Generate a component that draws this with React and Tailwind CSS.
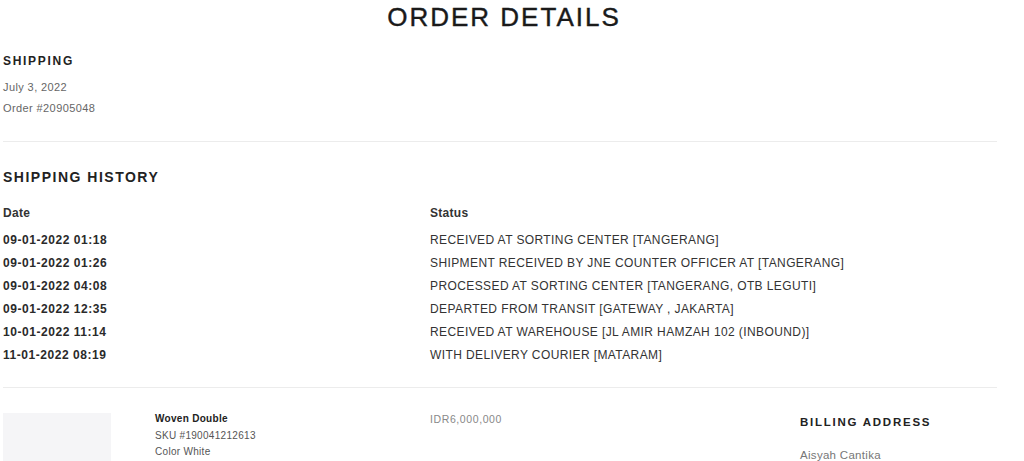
export default function App() {
  const rows = [
    ["09-01-2022 01:18", "RECEIVED AT SORTING CENTER [TANGERANG]"],
    ["09-01-2022 01:26", "SHIPMENT RECEIVED BY JNE COUNTER OFFICER AT [TANGERANG]"],
    ["09-01-2022 04:08", "PROCESSED AT SORTING CENTER [TANGERANG, OTB LEGUTI]"],
    ["09-01-2022 12:35", "DEPARTED FROM TRANSIT [GATEWAY , JAKARTA]"],
    ["10-01-2022 11:14", "RECEIVED AT WAREHOUSE [JL AMIR HAMZAH 102 (INBOUND)]"],
    ["11-01-2022 08:19", "WITH DELIVERY COURIER [MATARAM]"],
  ];
  return (
    <div className="w-full bg-white pl-[3px] pr-[19px] font-['Liberation_Sans',Arial,sans-serif] text-[#222]">
      <h1 className="text-center text-[26px] leading-[34px] tracking-[2px] text-[#1a1a1a] [-webkit-text-stroke:0.4px_#1a1a1a]">ORDER DETAILS</h1>

      <div className="mt-[19px] text-[12px] leading-[16px] font-bold tracking-[1.7px] text-[#222]">SHIPPING</div>
      <div className="mt-[8px] text-[11px] leading-[20px] text-[#666] tracking-[0.4px]">July 3, 2022</div>
      <div className="text-[11px] leading-[22px] text-[#666] tracking-[0.4px]">Order #20905048</div>

      <div className="mt-[22px] mr-2 border-t border-[#ececec]" />

      <div className="mt-[25px] text-[14px] leading-[20px] font-bold tracking-[1.5px] text-[#222]">SHIPPING HISTORY</div>

      <div className="mt-[16px] grid grid-cols-[427px_1fr] text-[12px] leading-[20px] font-bold tracking-[0.3px] text-[#333]">
        <div>Date</div>
        <div>Status</div>
      </div>
      <div className="mt-[6px] flex flex-col">
        {rows.map(([d, s]) => (
          <div key={d} className="grid grid-cols-[427px_1fr] leading-[23px]">
            <div className="text-[12px] font-bold tracking-[0.55px] text-[#2a2a2a]">{d}</div>
            <div className="text-[12px] tracking-[0.4px] text-[#333]">{s}</div>
          </div>
        ))}
      </div>

      <div className="mt-[20px] mr-2 border-t border-[#ececec]" />

      <div className="grid grid-cols-[152px_275px_370px_1fr] h-[73px] overflow-hidden">
        <div className="mt-[25px] w-[108px] h-[140px] bg-[#f5f5f7]" />
        <div className="mt-[23px] text-[10px] leading-[16.5px] tracking-[0.3px]">
          <div className="font-bold text-[#222]">Woven Double</div>
          <div className="text-[#555]">SKU #190041212613</div>
          <div className="text-[#555]">Color White</div>
        </div>
        <div className="mt-[23px] text-[10.5px] leading-[16px] tracking-[0.6px] text-[#888]">IDR6,000,000</div>
        <div className="mt-[26px]">
          <div className="text-[11.5px] leading-[16px] font-bold tracking-[1.75px] text-[#222]">BILLING ADDRESS</div>
          <div className="mt-[17px] text-[11.5px] leading-[16px] tracking-[0.3px] text-[#777]">Aisyah Cantika</div>
        </div>
      </div>
    </div>
  );
}
